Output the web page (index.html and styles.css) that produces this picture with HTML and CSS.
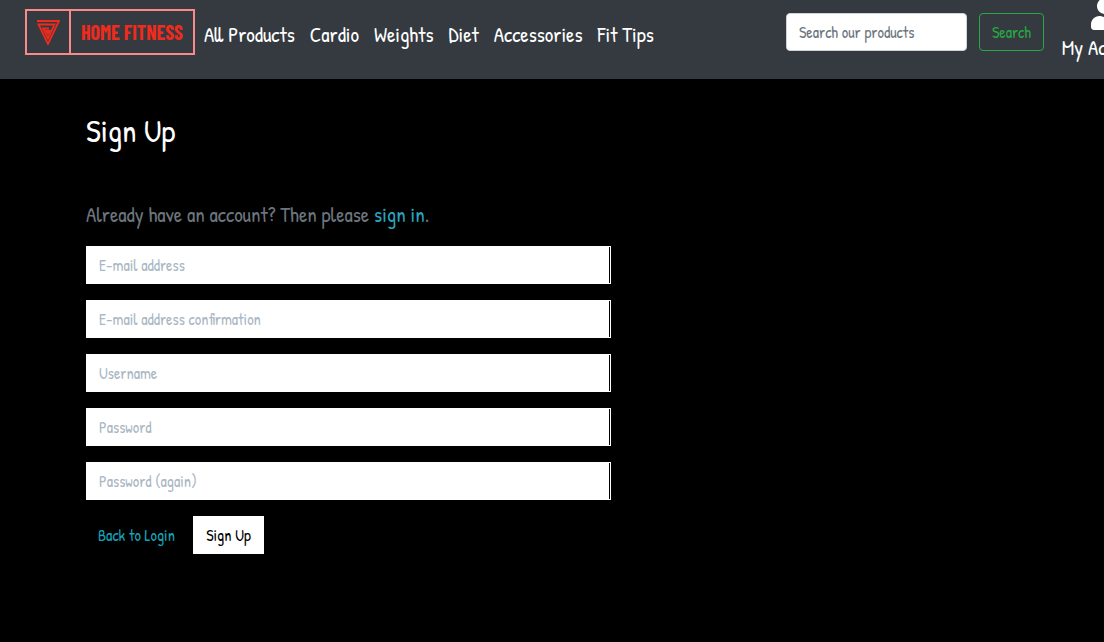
FILE: index.html
```html
<!DOCTYPE html>
<html lang="en">
<head>
<meta charset="utf-8">
<title>Home Fitness - Sign Up</title>
<meta name="viewport" content="width=device-width, initial-scale=1">
<link rel="stylesheet" href="styles.css">
</head>
<body>
<header class="site-header">
  <a class="brand" href="#" aria-label="Home Fitness">
    <span class="brand-mark">
      <svg class="brand-icon" viewBox="0 0 24 25" aria-hidden="true">
        <path d="M1 1H23L12 24L2.500 4.500H18.500L12 18.500L7 8.500H13" fill="none" stroke="#f02a1d" stroke-width="1.800"/>
        <path d="M8.500 10H15.500L12 15.500Z" fill="#f02a1d"/>
      </svg>
    </span>
    <span class="brand-name">HOME FITNESS</span>
  </a>
  <nav class="main-nav" aria-label="Main">
    <a class="nav-link" href="#">All Products</a>
    <a class="nav-link" href="#">Cardio</a>
    <a class="nav-link" href="#">Weights</a>
    <a class="nav-link" href="#">Diet</a>
    <a class="nav-link" href="#">Accessories</a>
    <a class="nav-link" href="#">Fit Tips</a>
  </nav>
  <form class="search">
    <input class="search-input" type="search" placeholder="Search our products" aria-label="Search our products">
    <button class="search-button" type="submit">Search</button>
  </form>
  <a class="account" href="#">
    <svg class="account-icon" viewBox="0 0 448 512" aria-hidden="true"><path fill="#fff" d="M224 256c70.700 0 128-57.300 128-128S294.700 0 224 0 96 57.300 96 128s57.300 128 128 128zm89.600 32h-16.700c-22.200 10.200-46.900 16-72.900 16s-50.600-5.800-72.900-16h-16.700C60.200 288 0 348.200 0 422.400V464c0 26.500 21.500 48 48 48h352c26.500 0 48-21.500 48-48v-41.600c0-74.200-60.200-134.400-134.400-134.400z"/></svg>
    <span>My Account</span>
  </a>
</header>
<main class="page">
  <h1 class="title">Sign Up</h1>
  <p class="lead">Already have an account? Then please <a class="lead-link" href="#">sign in</a>.</p>
  <form class="signup">
    <input class="field" type="email" placeholder="E-mail address" aria-label="E-mail address">
    <input class="field" type="email" placeholder="E-mail address confirmation" aria-label="E-mail address confirmation">
    <input class="field" type="text" placeholder="Username" aria-label="Username">
    <input class="field" type="password" placeholder="Password" aria-label="Password">
    <input class="field" type="password" placeholder="Password (again)" aria-label="Password (again)">
    <div class="actions">
      <a class="back" href="#">Back to Login</a>
      <button class="submit" type="submit">Sign Up</button>
    </div>
  </form>
</main>
</body>
</html>
```
FILE: styles.css
```css
* { box-sizing: border-box; }

body {
  margin: 0;
  min-height: 100vh;
  overflow-x: hidden;
  background: #000;
  color: #fff;
  font: 16px/24px "Patrick Hand", "Liberation Sans Narrow", Lato, sans-serif;
}

a { text-decoration: none; }
input, button { font: inherit; }

.site-header {
  display: flex;
  align-items: flex-start;
  padding: 0 0 16px 25px;
  background: #343a40;
  white-space: nowrap;
}

.brand {
  display: flex;
  flex: none;
  width: 170px;
  height: 46px;
  margin-top: 9px;
  border: 2px solid #f88a8a;
  color: #f02a1d;
}
.brand-mark {
  display: flex;
  align-items: center;
  justify-content: center;
  width: 44px;
  border-right: 2px solid #f88a8a;
}
.brand-icon { width: 24px; height: 25px; }
.brand-name {
  flex: 1;
  text-align: center;
  font-family: "Barlow Condensed", "Bebas Neue", "Liberation Sans Narrow", sans-serif;
  font-size: 20px;
  font-weight: 700;
  line-height: 42px;
}

.main-nav {
  display: flex;
  flex: none;
  gap: 15px;
  padding: 20px 0 0 9px;
}
.nav-link {
  color: #fff;
  font-size: 21px;
  line-height: 30px;
}

.search {
  display: flex;
  flex: none;
  gap: 12px;
  margin: 13px 0 0 auto;
}
.search-input {
  width: 181px;
  height: 38px;
  padding: 6px 12px;
  border: 1px solid #ced4da;
  border-radius: 4px;
  background: #fff;
}
.search-input::placeholder { color: #6c757d; opacity: 1; }
.search-button {
  width: 65px;
  height: 38px;
  padding: 0;
  border: 1px solid #28a745;
  border-radius: 4px;
  background: transparent;
  color: #28a745;
}

.account {
  display: flex;
  flex: none;
  flex-direction: column;
  align-items: center;
  width: 90px;
  margin: 0 -46px 0 16px;
  color: #fff;
  font-size: 21px;
  line-height: 30px;
}
.account-icon { width: 28px; height: 32px; margin: -2px 0 3px; }

.page {
  max-width: 1110px;
  padding: 32px 86px 48px;
}
.title {
  margin: 0 0 49px;
  font-size: 32px;
  font-weight: 400;
  line-height: 40px;
}
.lead {
  margin: 0 0 16px;
  color: #6c757d;
  font-size: 21px;
  line-height: 30px;
}
.lead-link { color: #2ba5bd; }

.signup {
  display: flex;
  flex-direction: column;
  gap: 16px;
  max-width: 525px;
}
.field {
  width: 100%;
  height: 38px;
  padding: 6px 12px;
  border: 1px solid #fff;
  border-radius: 0;
  background: linear-gradient(#000, #000) right / 1px 100% no-repeat padding-box, #fff;
}
.field::placeholder { color: #aab7c4; opacity: 1; }

.actions { display: flex; gap: 4px; }
.back {
  width: 103px;
  padding: 7px 0 7px 12px;
  color: #17a2b8;
}
.submit {
  width: 71px;
  height: 38px;
  padding: 0;
  border: 1px solid #fff;
  background: #fff;
  color: #000;
}
```
